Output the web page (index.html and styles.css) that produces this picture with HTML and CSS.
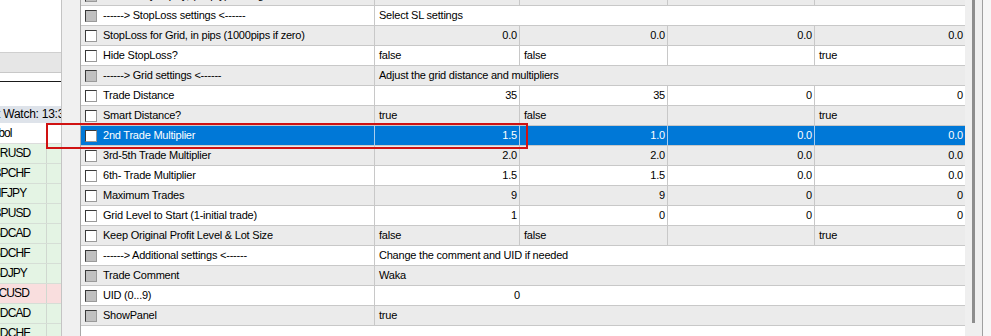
FILE: index.html
```html
<!DOCTYPE html>
<html>
<head>
<meta charset="utf-8">
<link rel="stylesheet" href="styles.css">
</head>
<body>
<div class="screen">
  <aside class="watch">
    <div class="w-top"></div>
    <div class="w-band"></div>
    <div class="w-gap"></div>
    <div class="w-gap2"></div>
    <div class="w-head"><span class="w-title">Market Watch: 13:35</span></div>
    <div class="w-row w-hdr"><span class="w-sym w-sym-hdr">Symbol</span><span class="w-c2"></span></div>
    <div class="w-row up"><span class="w-sym">EURUSD</span><span class="w-c2"></span></div>
    <div class="w-row up"><span class="w-sym">GBPCHF</span><span class="w-c2"></span></div>
    <div class="w-row up"><span class="w-sym">CHFJPY</span><span class="w-c2"></span></div>
    <div class="w-row up"><span class="w-sym">GBPUSD</span><span class="w-c2"></span></div>
    <div class="w-row up"><span class="w-sym">USDCAD</span><span class="w-c2"></span></div>
    <div class="w-row up"><span class="w-sym">USDCHF</span><span class="w-c2"></span></div>
    <div class="w-row up"><span class="w-sym">USDJPY</span><span class="w-c2"></span></div>
    <div class="w-row down"><span class="w-sym">BTCUSD</span><span class="w-c2"></span></div>
    <div class="w-row up"><span class="w-sym">AUDCAD</span><span class="w-c2"></span></div>
    <div class="w-row up"><span class="w-sym">AUDCHF</span><span class="w-c2"></span></div>
  </aside>
  <div class="gutter"></div>
  <main class="params">
    <div class="row alt">
      <div class="name"><span class="cb dis"></span>Lot Size by Equity, (empty) if using fixed lot</div>
      <div class="val num">0.01</div><div class="val num">0.01</div><div class="val num">0.0</div><div class="val num last">0.0</div>
    </div>
    <div class="row">
      <div class="name"><span class="cb dis"></span>------&gt; StopLoss settings &lt;------</div>
      <div class="val span">Select SL settings</div>
    </div>
    <div class="row alt">
      <div class="name"><span class="cb"></span>StopLoss for Grid, in pips (1000pips if zero)</div>
      <div class="val num">0.0</div><div class="val num">0.0</div><div class="val num">0.0</div><div class="val num last">0.0</div>
    </div>
    <div class="row">
      <div class="name"><span class="cb"></span>Hide StopLoss?</div>
      <div class="val">false</div><div class="val">false</div><div class="val"></div><div class="val last">true</div>
    </div>
    <div class="row alt">
      <div class="name"><span class="cb dis"></span>------&gt; Grid settings &lt;------</div>
      <div class="val span">Adjust the grid distance and multipliers</div>
    </div>
    <div class="row">
      <div class="name"><span class="cb"></span>Trade Distance</div>
      <div class="val num">35</div><div class="val num">35</div><div class="val num">0</div><div class="val num last">0</div>
    </div>
    <div class="row alt">
      <div class="name"><span class="cb"></span>Smart Distance?</div>
      <div class="val">true</div><div class="val">false</div><div class="val"></div><div class="val last">true</div>
    </div>
    <div class="row sel">
      <div class="name"><span class="cb"></span>2nd Trade Multiplier</div>
      <div class="val num">1.5</div><div class="val num">1.0</div><div class="val num">0.0</div><div class="val num last">0.0</div>
    </div>
    <div class="row alt">
      <div class="name"><span class="cb"></span>3rd-5th Trade Multiplier</div>
      <div class="val num">2.0</div><div class="val num">2.0</div><div class="val num">0.0</div><div class="val num last">0.0</div>
    </div>
    <div class="row">
      <div class="name"><span class="cb"></span>6th- Trade Multiplier</div>
      <div class="val num">1.5</div><div class="val num">1.5</div><div class="val num">0.0</div><div class="val num last">0.0</div>
    </div>
    <div class="row alt">
      <div class="name"><span class="cb"></span>Maximum Trades</div>
      <div class="val num">9</div><div class="val num">9</div><div class="val num">0</div><div class="val num last">0</div>
    </div>
    <div class="row">
      <div class="name"><span class="cb"></span>Grid Level to Start (1-initial trade)</div>
      <div class="val num">1</div><div class="val num">0</div><div class="val num">0</div><div class="val num last">0</div>
    </div>
    <div class="row alt">
      <div class="name"><span class="cb"></span>Keep Original Profit Level &amp; Lot Size</div>
      <div class="val">false</div><div class="val">false</div><div class="val"></div><div class="val last">true</div>
    </div>
    <div class="row">
      <div class="name"><span class="cb dis"></span>------&gt; Additional settings &lt;------</div>
      <div class="val span">Change the comment and UID if needed</div>
    </div>
    <div class="row alt">
      <div class="name"><span class="cb dis"></span>Trade Comment</div>
      <div class="val span">Waka</div>
    </div>
    <div class="row">
      <div class="name"><span class="cb dis"></span>UID (0...9)</div>
      <div class="val span"><span class="first-num">0</span></div>
    </div>
    <div class="row alt">
      <div class="name"><span class="cb dis"></span>ShowPanel</div>
      <div class="val span">true</div>
    </div>
  </main>
  <div class="vscroll"><div class="thumb"></div></div>
  <div class="edge"></div>
</div>
<div class="marker"></div>
</body>
</html>
```
FILE: styles.css
```css
* { box-sizing: border-box; }
html, body { margin: 0; padding: 0; }
body {
  width: 991px;
  height: 336px;
  overflow: hidden;
  background: #f0f0f0;
  font-family: "Liberation Sans", Arial, sans-serif;
  font-size: 11px;
  color: #000;
  position: relative;
}
.screen {
  display: flex;
  height: 336px;
}

/* ---- Market watch panel ---- */
.watch {
  width: 62px;
  flex: none;
  background: #fff;
  border-right: 1px solid #c4c4c4;
  overflow: hidden;
  font-size: 12px;
  letter-spacing: -0.9px;
}
.w-top { height: 53px; border-bottom: 1px solid #cfcfcf; }
.w-band { height: 20px; background: #e6e6e6; border-bottom: 1px solid #c8c8c8; }
.w-gap { height: 9px; border-bottom: 1px solid #1a1a1a; }
.w-gap2 { height: 24px; }
.w-head {
  height: 17px;
  background: #dee3ea;
  white-space: nowrap;
  line-height: 17px;
  overflow: hidden;
  letter-spacing: -0.25px;
}
.w-title { display: inline-block; margin-left: -35px; }
.w-row {
  height: 20px;
  display: flex;
  border-bottom: 1px solid #d6ded6;
  white-space: nowrap;
  line-height: 19px;
}
.w-hdr { margin-top: 1px; background: #fff; border-bottom-color: #dcdcdc; }
.up { background: #e4f4e4; }
.down { background: #f9dede; }
.w-sym {
  width: 47px;
  flex: none;
  overflow: hidden;
  border-right: 1px solid #d0d8d0;
  text-indent: -15px;
}
.w-sym-hdr { text-indent: -23px; }
.w-c2 { flex: 1; }

/* ---- gutter between panels ---- */
.gutter {
  width: 19px;
  flex: none;
  background: #f0f0f0;
  border-right: 1px solid #a8a8a8;
}

/* ---- parameter table ---- */
.params {
  width: 884px;
  flex: none;
  background: #fff;
  margin-top: -14px;
  height: 350px;
  letter-spacing: -0.22px;
}
.row {
  display: grid;
  grid-template-columns: 294px 145px 148px 147px 150px;
  height: 20px;
  border-bottom: 1px solid #c8c8c8;
  background: #fff;
  line-height: 19px;
  white-space: nowrap;
}
.row.alt { background: #ebebeb; }
.row.sel { background: #0078d7; color: #fff; }
.name {
  display: flex;
  align-items: center;
  border-right: 1px solid #c8c8c8;
  padding-left: 4px;
  overflow: hidden;
}
.cb {
  width: 12px;
  height: 12px;
  flex: none;
  margin-right: 6px;
  background: #fff;
  border-top: 1px solid #3a3a3a;
  border-left: 1px solid #3a3a3a;
  border-right: 1px solid #9a9a9a;
  border-bottom: 1px solid #9a9a9a;
}
.cb.dis { background: #c0c0c0; }
.val {
  border-right: 1px solid #c8c8c8;
  padding: 0 2px 0 4px;
  overflow: hidden;
}
.val.last { border-right: none; }
.num { text-align: right; }
.val.span { grid-column: 2 / -1; border-right: none; }
.first-num { display: inline-block; width: 141px; text-align: right; }
.row.sel .name, .row.sel .val { border-right-color: #a9cdee; }
.row.sel .val.last { border-right: none; }

/* ---- scrollbar ---- */
.vscroll {
  width: 17px;
  flex: none;
  background: #efefef;
  padding-left: 7px;
}
.thumb { width: 3px; height: 323px; background: #8d8d8d; }
.edge {
  flex: 1;
  border-left: 1px solid #a0a0a0;
  background: #f7f7f7;
}

/* ---- annotation ---- */
.marker {
  position: absolute;
  left: 46px;
  top: 123px;
  width: 482px;
  height: 26px;
  border: 2px solid #d01212;
}
```
